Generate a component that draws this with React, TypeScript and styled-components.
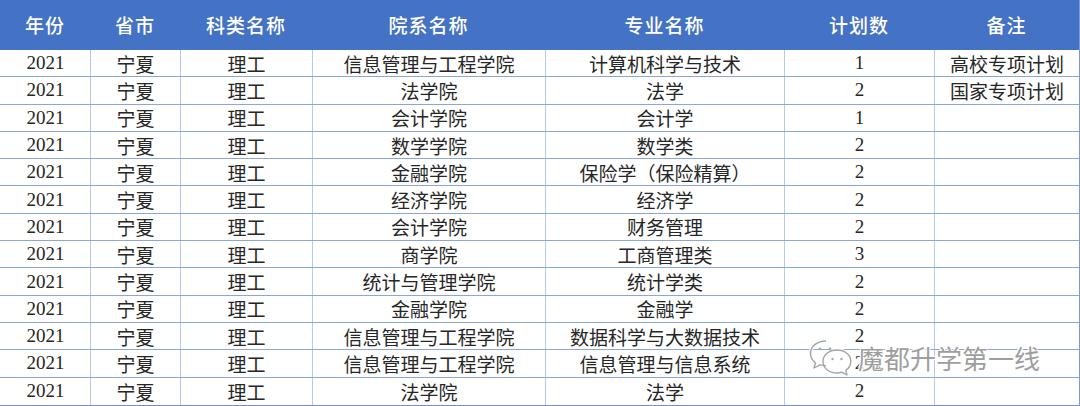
import React from "react";
import styled, { createGlobalStyle } from "styled-components";

const Global = createGlobalStyle`
  html, body { margin: 0; padding: 0; background: #ffffff; }
  body { width: 1080px; height: 406px; overflow: hidden; }
`;

const COLS = "90px 90px 132px 233px 239px 150px 145px";

const Page = styled.div`
  position: relative;
  width: 1080px;
  height: 406px;
  background: #ffffff;
`;

const Table = styled.div`
  width: 1079px;
  display: flex;
  flex-direction: column;
  border-right: 1px solid #7d9bd3;
  border-bottom: 2px solid #6f8fcf;
`;

const HeaderRow = styled.div`
  display: grid;
  grid-template-columns: ${COLS};
  height: 50px;
  background: #4472c4;
`;

const HeaderCell = styled.div`
  display: flex;
  align-items: center;
  justify-content: center;
  color: #ffffff;
  font-family: "Noto Sans CJK SC", "Noto Sans", sans-serif;
  font-weight: 500;
  font-size: 19px;
  letter-spacing: 1px;
  padding-bottom: 2px;
`;

const BodyRow = styled.div`
  display: grid;
  grid-template-columns: ${COLS};
  height: 27.3px;
  box-sizing: border-box;
  border-bottom: 1px solid #8aa6da;
  &:last-child { border-bottom: none; }
`;

const Cell = styled.div<{ $first?: boolean }>`
  display: flex;
  align-items: center;
  justify-content: center;
  box-sizing: border-box;
  border-left: 1px solid ${(p) => (p.$first ? "transparent" : "#b7c8ea")};
  color: #262626;
  font-family: "Liberation Serif", "Noto Sans CJK SC", serif;
  font-weight: 400;
  font-size: 19px;
  white-space: nowrap;
  overflow: hidden;
`;

const Watermark = styled.div`
  position: absolute;
  left: 808px;
  top: 338px;
  display: flex;
  align-items: center;
  gap: 4px;
  pointer-events: none;
`;

const MarkText = styled.span`
  font-family: "Noto Sans CJK SC", sans-serif;
  font-size: 26px;
  font-weight: 400;
  color: #9e9e9e;
  text-shadow: 0 0 1px #fff, 1px 1px 0 #fff, -1px -1px 0 #fff, 1px -1px 0 #fff, -1px 1px 0 #fff;
`;

const headers = ["年份", "省市", "科类名称", "院系名称", "专业名称", "计划数", "备注"];

const rows: [string, string, string, string][] = [
  ["信息管理与工程学院", "计算机科学与技术", "1", "高校专项计划"],
  ["法学院", "法学", "2", "国家专项计划"],
  ["会计学院", "会计学", "1", ""],
  ["数学学院", "数学类", "2", ""],
  ["金融学院", "保险学（保险精算）", "2", ""],
  ["经济学院", "经济学", "2", ""],
  ["会计学院", "财务管理", "2", ""],
  ["商学院", "工商管理类", "3", ""],
  ["统计与管理学院", "统计学类", "2", ""],
  ["金融学院", "金融学", "2", ""],
  ["信息管理与工程学院", "数据科学与大数据技术", "2", ""],
  ["信息管理与工程学院", "信息管理与信息系统", "2", ""],
  ["法学院", "法学", "2", ""],
];

const WeChatIcon = () => (
  <svg width="46" height="38" viewBox="0 0 46 38">
    <g fill="none" strokeLinejoin="round">
      <g stroke="#ffffff" strokeWidth="3.5">
        <path d="M18 3C9 3 2.5 8.5 2.5 15.5c0 3.8 2 7 5 9.2L6 30l6-3.2c1.8.5 3.8.8 6 .8" />
        <path d="M29 12c-8 0-14 5-14 11.5S21 35 29 35c1.8 0 3.4-.3 5-.7l5 2.7-1.2-4.6c3-2 5-5 5-8.9C42.8 17 36.8 12 29 12z" />
      </g>
      <g stroke="#a5a5a5" strokeWidth="1.4">
        <path d="M18 3C9 3 2.5 8.5 2.5 15.5c0 3.8 2 7 5 9.2L6 30l6-3.2c1.8.5 3.8.8 6 .8" />
        <path d="M29 12c-8 0-14 5-14 11.5S21 35 29 35c1.8 0 3.4-.3 5-.7l5 2.7-1.2-4.6c3-2 5-5 5-8.9C42.8 17 36.8 12 29 12z" />
      </g>
    </g>
    <g fill="#a8a8a8">
      <circle cx="12" cy="11" r="1.4" />
      <circle cx="22" cy="11" r="1.4" />
      <circle cx="24.5" cy="21" r="1.2" />
      <circle cx="33.5" cy="21" r="1.2" />
    </g>
  </svg>
);

export default function App() {
  return (
    <Page>
      <Global />
      <Table>
        <HeaderRow>
          {headers.map((h) => (
            <HeaderCell key={h}>{h}</HeaderCell>
          ))}
        </HeaderRow>
        {rows.map((r, i) => (
          <BodyRow key={i}>
            <Cell $first>2021</Cell>
            <Cell>宁夏</Cell>
            <Cell>理工</Cell>
            <Cell>{r[0]}</Cell>
            <Cell>{r[1]}</Cell>
            <Cell>{r[2]}</Cell>
            <Cell>{r[3]}</Cell>
          </BodyRow>
        ))}
      </Table>
      <Watermark>
        <WeChatIcon />
        <MarkText>魔都升学第一线</MarkText>
      </Watermark>
    </Page>
  );
}
